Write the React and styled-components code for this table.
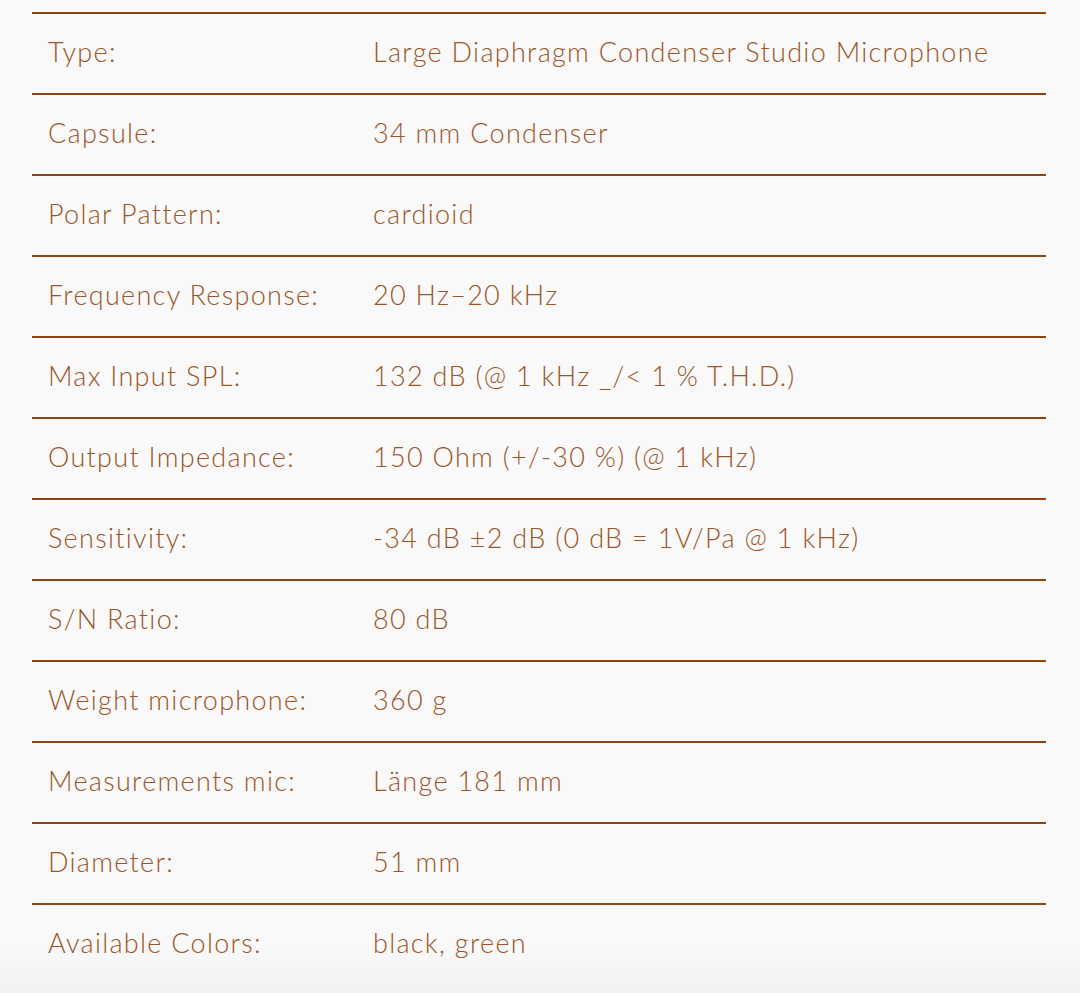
import React from "react";
import styled, { createGlobalStyle } from "styled-components";

const Global = createGlobalStyle`
  html, body { margin: 0; padding: 0; }
  body {
    background: linear-gradient(to bottom, #f9f9f9 0px, #f9f9f9 945px, #f1f1f1 993px);
    min-height: 993px;
    font-family: Lato, "Open Sans", sans-serif;
  }
`;

const Page = styled.div`
  padding: 12px 34px 0 32px;
`;

const Table = styled.div`
  display: flex;
  flex-direction: column;
`;

const Row = styled.div`
  display: grid;
  grid-template-columns: 341px 1fr;
  align-items: center;
  box-sizing: content-box;
  height: 75px;
  padding-bottom: 4px;
  border-top: 2px solid #8b4513;
`;

const Cell = styled.div`
  padding-left: ${(p) => (p.$label ? "16px" : "0")};
  font-size: 27px;
  font-weight: 300;
  line-height: 30px;
  color: #9a5528;
  letter-spacing: 1.3px;
`;

const specs = [
  ["Type:", "Large Diaphragm Condenser Studio Microphone"],
  ["Capsule:", "34 mm Condenser"],
  ["Polar Pattern:", "cardioid"],
  ["Frequency Response:", "20 Hz–20 kHz"],
  ["Max Input SPL:", "132 dB (@ 1 kHz _/< 1 % T.H.D.)"],
  ["Output Impedance:", "150 Ohm (+/-30 %) (@ 1 kHz)"],
  ["Sensitivity:", "-34 dB ±2 dB (0 dB = 1V/Pa @ 1 kHz)"],
  ["S/N Ratio:", "80 dB"],
  ["Weight microphone:", "360 g"],
  ["Measurements mic:", "Länge 181 mm"],
  ["Diameter:", "51 mm"],
  ["Available Colors:", "black, green"],
];

export default function App() {
  return (
    <>
      <Global />
      <Page>
        <Table>
          {specs.map(([k, v]) => (
            <Row key={k}>
              <Cell $label>{k}</Cell>
              <Cell>{v}</Cell>
            </Row>
          ))}
        </Table>
      </Page>
    </>
  );
}
